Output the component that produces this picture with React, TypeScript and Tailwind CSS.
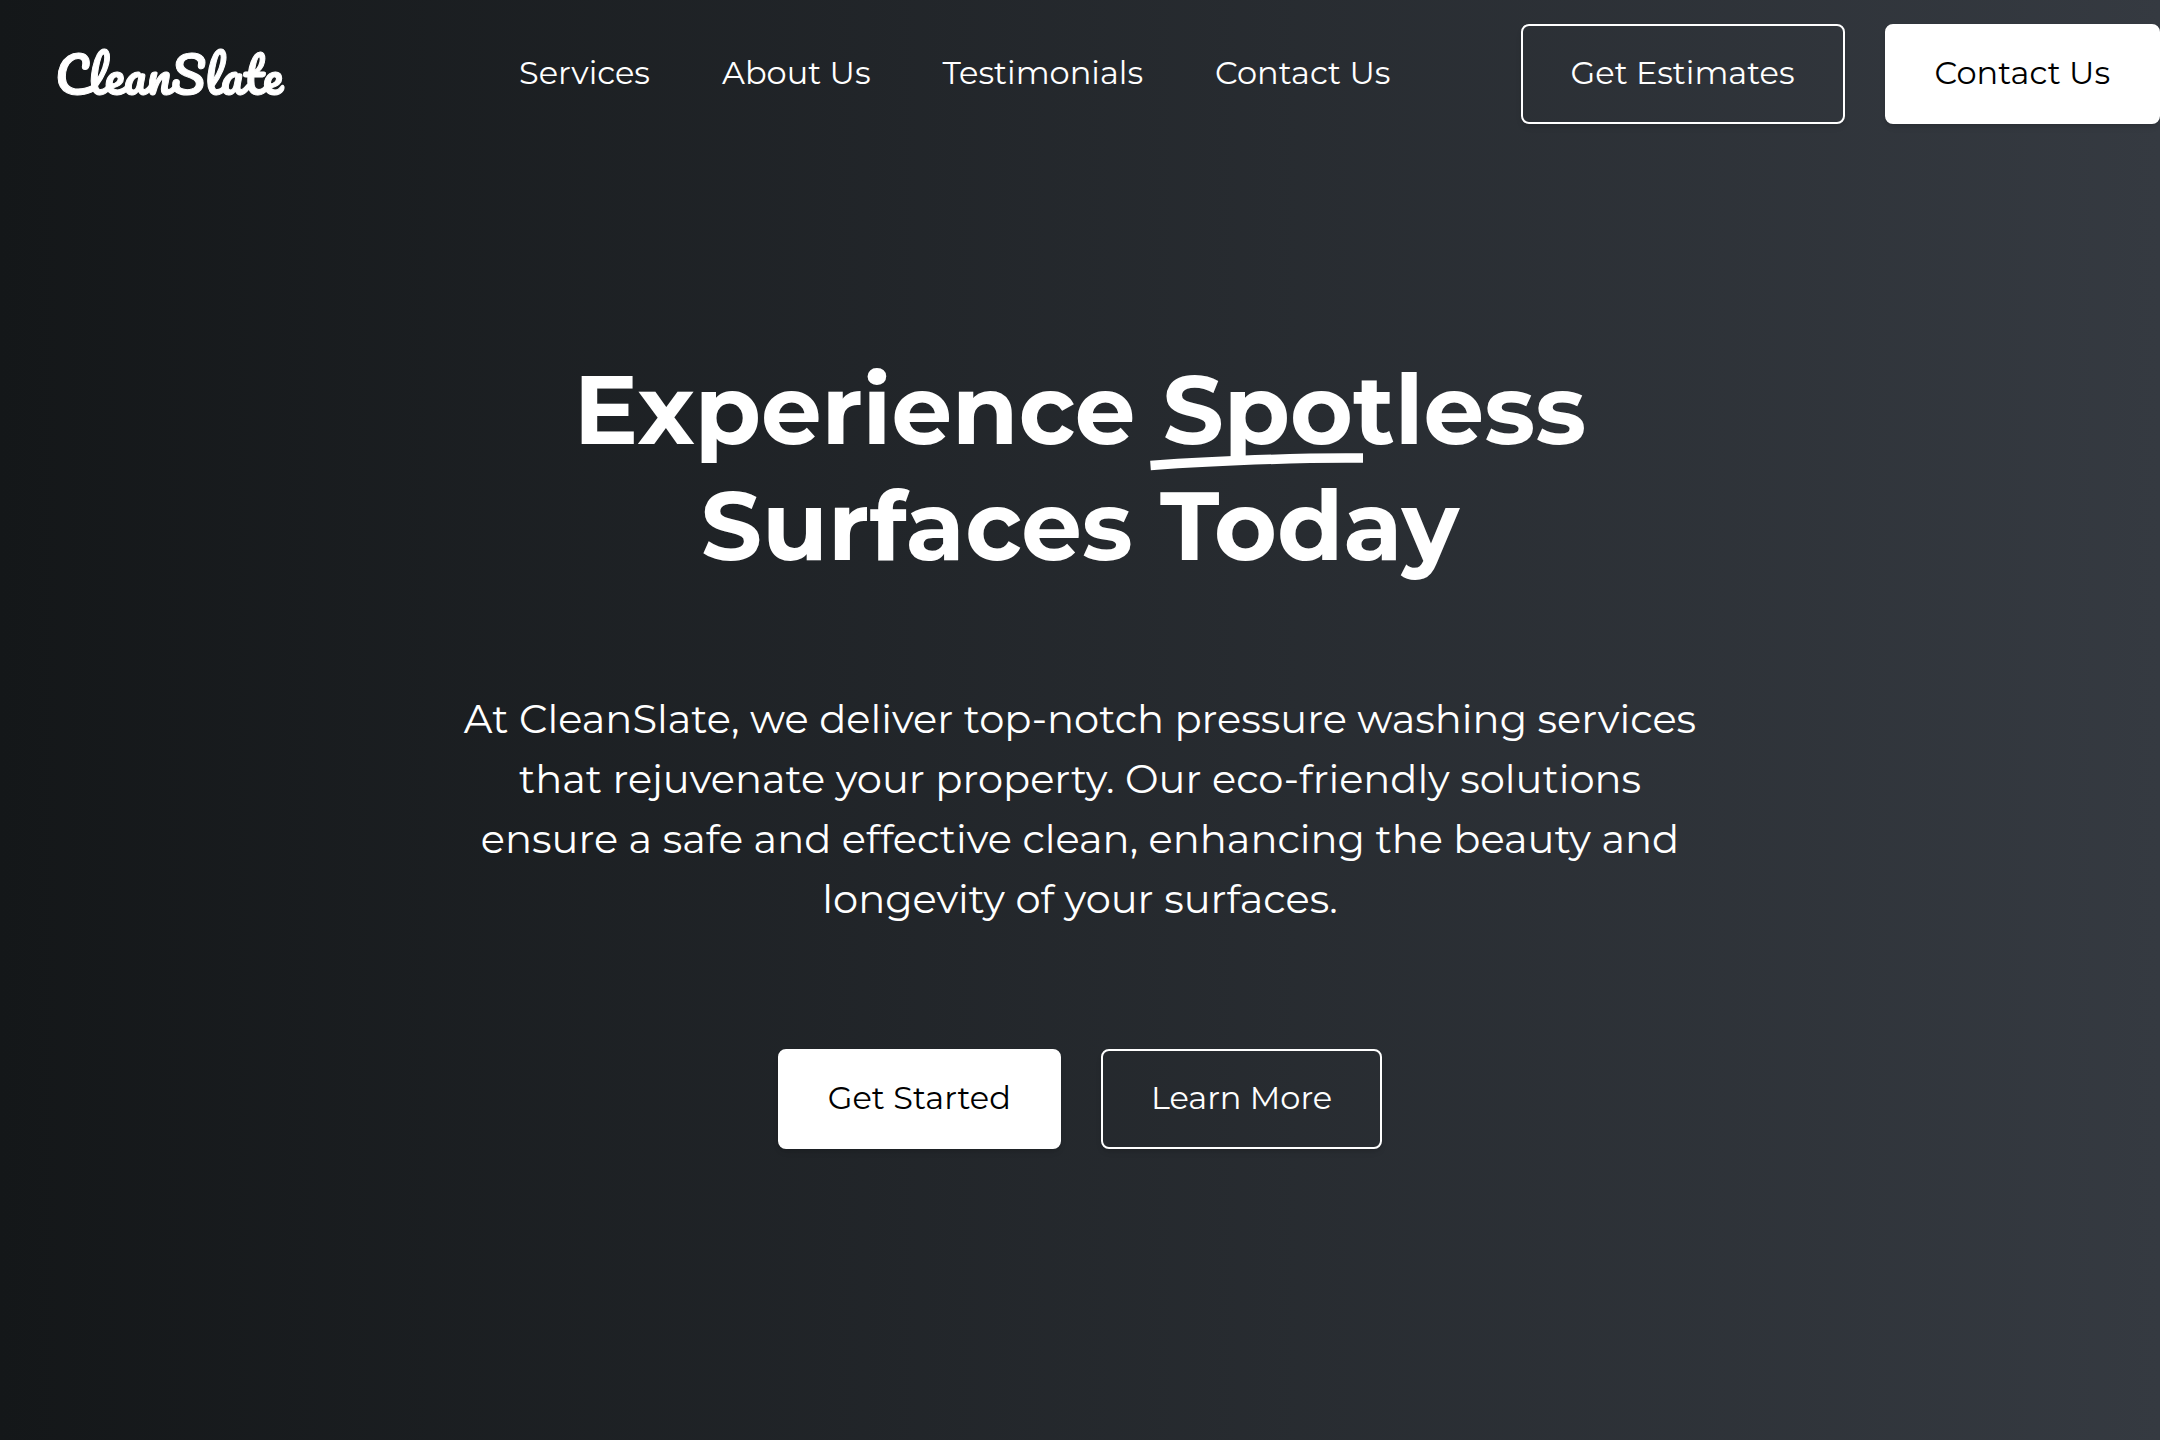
import React from "react";

const navLinks = [
  { label: "Services", href: "#services" },
  { label: "About Us", href: "#about" },
  { label: "Testimonials", href: "#testimonials" },
  { label: "Contact Us", href: "#contact" },
];

const buttonBase =
  "flex h-[100px] items-center justify-center whitespace-nowrap rounded-lg border-2 border-white px-12 pb-0.5 text-[32px] leading-[48px] shadow-md";
const solid = "bg-white text-black";
const outline = "bg-transparent text-white";

function Underline() {
  return (
    <svg
      aria-hidden="true"
      viewBox="0 0 214 18"
      fill="none"
      className="absolute -left-[13px] top-[102px] h-[18px] w-[214px]"
    >
      <path d="M0.5 12.5C56 8.5 112 6.5 160 5.2C178 4.9 195 5 213 5" stroke="white" strokeWidth="9.5" />
    </svg>
  );
}

export default function App() {
  return (
    <div className="min-h-screen overflow-x-hidden bg-linear-to-r/srgb from-[#141719] to-[#353a41] font-[Montserrat,Inter,sans-serif] text-white">
      <header className="flex items-center py-6 pl-[55px]">
        <a
          href="#home"
          className="w-[232px] whitespace-nowrap font-[Pacifico,cursive] text-[49px] leading-[72px] [-webkit-text-stroke:1px_white]"
        >
          CleanSlate
        </a>
        <nav className="ml-[232px] flex items-center gap-[72px] pb-0.5 text-[32px] leading-[48px]">
          {navLinks.map((link) => (
            <a key={link.label} href={link.href} className="whitespace-nowrap">
              {link.label}
            </a>
          ))}
        </nav>
        <div className="ml-auto flex gap-10">
          <button type="button" className={`${buttonBase} ${outline}`}>
            Get Estimates
          </button>
          <button type="button" className={`${buttonBase} ${solid}`}>
            Contact Us
          </button>
        </div>
      </header>

      <main className="flex flex-col items-center pt-[204px] pb-24 text-center">
        <h1 className="text-[96px] leading-[116px] font-bold">
          Experience{" "}
          <span className="relative">
            Spotless
            <Underline />
          </span>
          <br />
          Surfaces Today
        </h1>
        <p className="mt-[105px] text-[40px] leading-[60px]">
          At CleanSlate, we deliver top-notch pressure washing services
          <br />
          that rejuvenate your property. Our eco-friendly solutions
          <br />
          ensure a safe and effective clean, enhancing the beauty and
          <br />
          longevity of your surfaces.
        </p>
        <div className="mt-[120px] flex gap-10">
          <button type="button" className={`${buttonBase} ${solid}`}>
            Get Started
          </button>
          <button type="button" className={`${buttonBase} ${outline}`}>
            Learn More
          </button>
        </div>
      </main>
    </div>
  );
}
